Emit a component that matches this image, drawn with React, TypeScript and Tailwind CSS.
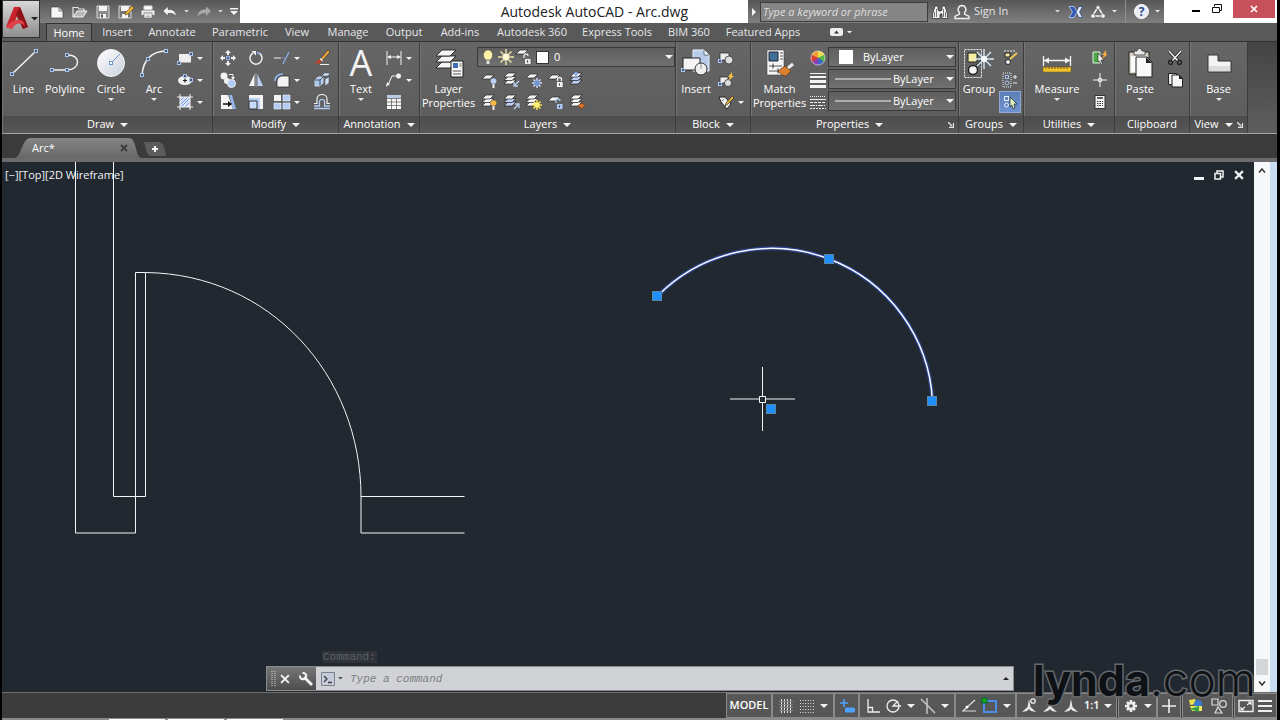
import React from "react";

type IconProps = { children: React.ReactNode; className?: string };

// 16px drawing box, used for the small ribbon tools
const Ico = ({ children, className = "" }: IconProps) => (
  <svg viewBox="0 0 16 16" className={`h-4 w-4 shrink-0 overflow-visible ${className}`} fill="none" aria-hidden="true">
    {children}
  </svg>
);

// 32x30 drawing box, used for the large ribbon tools
const Big = ({ children }: IconProps) => (
  <svg viewBox="0 0 32 30" className="h-[30px] w-8 shrink-0 overflow-visible" fill="none" aria-hidden="true">
    {children}
  </svg>
);

const Caret = ({ className = "w-2 text-gray-100" }: { className?: string }) => (
  <svg viewBox="0 0 8 4" className={`shrink-0 ${className}`} fill="currentColor" aria-hidden="true">
    <path d="M0 0h8L4 4z" />
  </svg>
);

const Grip = ({ x, y }: { x: number; y: number }) => (
  <rect x={x - 1.5} y={y - 1.5} width="3" height="3" fill="#4a5568" stroke="#a9c4f5" />
);

const Sheet = ({ x = 0, y = 0, c = "#f4f4f4" }) => (
  <path d={`M${x + 4} ${y}h8l-4 4h-8z`} fill={c} stroke="#222" strokeWidth=".7" />
);

const Stack = ({ c = "#f4f4f4" }) => (
  <>
    <Sheet y={8} c={c} />
    <Sheet y={4.5} c={c} />
    <Sheet y={1} />
  </>
);

const BigButton = ({ icon, lines, caret, className }: { icon: React.ReactNode; lines: string[]; caret?: boolean; className: string }) => (
  <button className={`flex shrink-0 flex-col items-center pt-1.5 ${className}`}>
    {icon}
    <span className="mt-1 flex flex-col">
      {lines.map((line) => (
        <span key={line} className="leading-[14px]">{line}</span>
      ))}
    </span>
    {caret && <Caret className="mt-0.5 w-1.5 text-gray-200" />}
  </button>
);

const Tool = ({ label, children, caret, className = "justify-center" }: { label: string; children: React.ReactNode; caret?: boolean; className?: string }) => (
  <button aria-label={label} className={`flex h-[22px] items-center gap-1 ${className}`}>
    {children}
    {caret && <Caret className="w-1.5 text-gray-100" />}
  </button>
);

type PanelProps = { title: string; className: string; children: React.ReactNode; caret?: boolean; launcher?: boolean };

const Panel = ({ title, className, children, caret = true, launcher }: PanelProps) => (
  <section className={`flex shrink-0 flex-col border-r border-[#3c3c3c] shadow-[inset_1px_0_0_#757575] ${className}`}>
    <div className="flex h-[74px]">{children}</div>
    <footer className={`relative flex h-[17px] items-center justify-center gap-1.5 bg-linear-to-b from-[#4c4c4c] to-[#585858] ${launcher ? "pr-2.5" : ""}`}>
      <span>{title}</span>
      {caret && <Caret />}
      {launcher && (
        <button aria-label={`${title} settings`} className="absolute right-1 top-1.5">
          <svg viewBox="0 0 6 6" className="h-1.5 w-1.5" stroke="#e5e5e5" fill="none">
            <path d="M0 0l4 4M5.500 1v4.500H1" strokeWidth="1.300" />
          </svg>
        </button>
      )}
    </footer>
  </section>
);

const Combo = ({ label, value, children, className = "" }: { label: string; value: string; children?: React.ReactNode; className?: string }) => (
  <label className={`flex h-5 items-center border border-[#3a3a3a] bg-linear-to-b from-[#5f5f5f] to-[#707070] pr-px ${className}`}>
    {children}
    <select aria-label={label} className="min-w-0 flex-1 appearance-none bg-transparent leading-4 outline-none">
      <option>{value}</option>
    </select>
    <Caret />
  </label>
);

const LineSample = () => (
  <svg viewBox="0 0 56 2" className="ml-1.5 mr-0.5 h-0.5 w-14 shrink-0" aria-hidden="true">
    <path d="M0 1h56" stroke="#f4f4f4" />
  </svg>
);

const QuickAccess = () => (
  <nav aria-label="Quick access" className="flex w-[200px] shrink-0 items-center bg-linear-to-b from-[#565656] via-[#6c6c6c] to-[#808080] pl-[9px]">
    <button aria-label="New" className="w-[23px]">
      <Ico><path d="M2 3h8l4 4v7H2z" fill="#f5f5f5" stroke="#333" strokeWidth=".6" /><path d="M10 3v4h4" stroke="#777" /></Ico>
    </button>
    <button aria-label="Open" className="w-[23px]">
      <Ico><path d="M1 13V3.500h5l1 1.500h5v2" stroke="#e4e4e4" strokeWidth="1.200" /><path d="M1 13l4-6h10l-4 6z" fill="#b8b8b8" stroke="#f2f2f2" /></Ico>
    </button>
    <button aria-label="Save" className="w-[23px]">
      <Ico><path d="M2 2h12v12H2z" fill="#8a8a8a" stroke="#d8d8d8" /><path d="M4 2h8v5H4z" fill="#f4f4f4" /><path d="M5 10h6v4H5z" fill="#f4f4f4" /><path d="M6 10.500h2v3H6z" fill="#555" /></Ico>
    </button>
    <button aria-label="Save as" className="w-[22px]">
      <Ico><path d="M1 2h12v12H1z" fill="#777" stroke="#d8d8d8" /><path d="M3 2h8v5H3z" fill="#f4f4f4" /><path d="M4 10h6v4H4z" fill="#f4f4f4" /><path d="M7 11l1-3 6-6 2 2-6 6z" fill="#e3b23c" stroke="#6b4a12" strokeWidth=".6" /></Ico>
    </button>
    <button aria-label="Plot" className="w-[22px]">
      <Ico><path d="M4 6V2h8v4" fill="#fff" stroke="#ddd" /><rect x="1" y="6" width="14" height="5.500" rx="1" fill="#e8e8e8" stroke="#555" strokeWidth=".6" /><path d="M4 9h8v5H4z" fill="#fff" stroke="#666" strokeWidth=".7" /><path d="M5.500 11h5M5.500 12.500h5" stroke="#888" strokeWidth=".6" /></Ico>
    </button>
    <button aria-label="Undo" className="flex w-[34px] items-center gap-1.5">
      <Ico><path d="M1 7l5-4.500v3c5-.3 8 1.700 8.500 7.500-1.500-3-4-4-8.500-3.700v2.700z" fill="#f2f2f2" stroke="#444" strokeWidth=".5" /></Ico>
      <Caret className="w-[5px] text-gray-300" />
    </button>
    <button aria-label="Redo" className="flex w-[34px] items-center gap-1.5">
      <Ico><path d="M15 7l-5-4.500v3C5 5.200 2 7.200 1.500 13c1.500-3 4-4 8.500-3.700v2.700z" fill="#a9a9a9" /></Ico>
      <Caret className="w-[5px] text-gray-300" />
    </button>
    <button aria-label="Customize" className="text-gray-100">
      <svg viewBox="0 0 8 7" className="w-2" fill="currentColor"><path d="M0 0h8v1.500H0zM0 3h8L4 7z" /></svg>
    </button>
  </nav>
);

const TitleBar = () => (
  <div className="flex h-[23px] min-w-0">
    <QuickAccess />
    <h1 className="flex flex-1 items-center justify-end truncate bg-white pr-[60px] font-['Open_Sans',sans-serif] text-[14px] text-[#222]">
      Autodesk AutoCAD - Arc.dwg
    </h1>
    <div className="flex w-[416px] shrink-0 items-center bg-linear-to-b from-[#565656] via-[#6c6c6c] to-[#808080]">
      <span className="flex h-full w-3 items-center justify-center">
        <svg viewBox="0 0 4 8" className="h-2 w-1" fill="#f4f4f4"><path d="M0 0l4 4-4 4z" /></svg>
      </span>
      <input
        aria-label="Search"
        placeholder="Type a keyword or phrase"
        className="h-5 w-[168px] border border-[#3c3c3c] bg-[#858585] px-0.5 text-[11px] italic placeholder:text-[#dedede]"
      />
      <button aria-label="Find" className="ml-1">
        <Ico>
          <path d="M3 2h3v4l1 1h2l1-1V2h3l2.500 8v4.500h-5.500V10h-2v4.500H.5V10z" fill="#f2f2f2" stroke="#222" strokeWidth=".7" />
          <path d="M4.500 5v8M11.500 5v8M2.500 8v5M13.500 8v5" stroke="#555" strokeWidth=".8" />
        </Ico>
      </button>
      <button className="ml-1.5 flex items-center gap-1 text-[11px] text-gray-200">
        <Ico><path d="M8 1.500a4 4 0 0 1 2.500 7v1.500l4.500 2.500v2H1v-2L5.500 10V8.500A4 4 0 0 1 8 1.500z" fill="#666" stroke="#f0f0f0" strokeWidth="1.400" /></Ico>
        Sign In
      </button>
      <Caret className="ml-auto w-[5px] text-gray-300" />
      <button aria-label="Exchange" className="ml-2">
        <Ico><path d="M1 2.500h5l3 5.500-3 5.500H1L4.500 8z" fill="#2f57b5" stroke="#cfdcff" strokeWidth=".7" /><path d="M14.500 2.500H11L8 8l3 5.500h3.500L11.500 8z" fill="#e8efff" stroke="#27427e" strokeWidth=".7" /></Ico>
      </button>
      <button aria-label="Connect" className="ml-1.5 flex items-center gap-1.5">
        <Ico><path d="M8 3l5.500 9h-11z" stroke="#f2f2f2" strokeWidth="1.500" /><circle cx="8" cy="3.500" r="2" fill="#f2f2f2" stroke="#444" strokeWidth=".5" /><circle cx="3" cy="12" r="2.300" fill="#f2f2f2" stroke="#444" strokeWidth=".5" /><circle cx="13" cy="12" r="2.300" fill="#f2f2f2" stroke="#444" strokeWidth=".5" /></Ico>
        <Caret className="w-[5px] text-gray-200" />
      </button>
      <button aria-label="Help" className="ml-2 flex h-full items-center gap-1.5 border-l border-[#909090] pl-2 pr-1">
        <span className="flex h-[15px] w-[15px] items-center justify-center rounded-full border border-white bg-[#e9edf5] text-[12px] leading-none font-bold text-[#2c4c84]">?</span>
        <Caret className="w-[5px] text-gray-200" />
      </button>
    </div>
    <div className="flex w-[113px] shrink-0 items-start justify-between bg-white pr-0.5 pl-7">
      <button aria-label="Minimize" className="pt-2.5"><span className="block h-0.5 w-2 bg-black" /></button>
      <button aria-label="Restore" className="pt-1">
        <svg viewBox="0 0 10 10" className="w-2.5" fill="none" stroke="#111"><path d="M2.500 2.500v-2h7v6h-2M.5 3.500h7v5h-7z" /></svg>
      </button>
      <button aria-label="Close" className="flex h-[18px] w-[42px] items-center justify-center bg-[#c8505a]">
        <svg viewBox="0 0 8 8" className="w-2" stroke="#fff" strokeWidth="1.700"><path d="M1 1l6 6M7 1L1 7" /></svg>
      </button>
    </div>
  </div>
);

const tabs = [
  { name: "Insert", width: "w-[42px]" },
  { name: "Annotate", width: "w-[68px]" },
  { name: "Parametric", width: "w-[68px]" },
  { name: "View", width: "w-[46px]" },
  { name: "Manage", width: "w-14" },
  { name: "Output", width: "w-14" },
  { name: "Add-ins", width: "w-14" },
  { name: "Autodesk 360", width: "w-[88px]" },
  { name: "Express Tools", width: "w-[82px]" },
  { name: "BIM 360", width: "w-[62px]" },
  { name: "Featured Apps", width: "w-[86px]" },
];

const RibbonTabs = () => (
  <nav className="flex h-[18px] items-stretch overflow-hidden pl-1.5">
    <button className="mr-1 w-[46px] shrink-0 border border-b-0 border-[#303030] bg-[#6a6a6a] leading-4 text-white">Home</button>
    {tabs.map((tab) => (
      <button key={tab.name} className={`shrink-0 whitespace-nowrap text-gray-200 ${tab.width}`}>{tab.name}</button>
    ))}
    <button aria-label="Minimize ribbon" className="ml-6 flex items-center gap-1">
      <svg viewBox="0 0 13 8" className="w-[13px]"><rect width="13" height="8" rx="2" fill="#eee" /><path d="M4 5.500h5L6.500 2.500z" fill="#333" /></svg>
      <Caret className="w-[5px] text-gray-100" />
    </button>
  </nav>
);

const DrawPanel = () => (
  <Panel title="Draw" className="w-[211px] pl-px">
    <BigButton className="w-[41px]" lines={["Line"]} icon={<Big><path d="M4 26L28 3" stroke="#f2f2f2" strokeWidth="1.500" /><Grip x={4} y={26} /><Grip x={28} y={3} /></Big>} />
    <BigButton className="w-[42px]" lines={["Polyline"]} icon={<Big><path d="M3 22h15c14 0 14-16 0-15" stroke="#f2f2f2" strokeWidth="1.500" /><Grip x={3} y={22} /><Grip x={18} y={22} /><Grip x={18} y={7} /></Big>} />
    <BigButton
      className="w-[50px]" caret lines={["Circle"]}
      icon={<Big><defs><linearGradient id="disc" x1="0" y1="0" x2="1" y2="1"><stop stopColor="#fff" /><stop offset="1" stopColor="#c9cfd9" /></linearGradient></defs><circle cx="16" cy="15" r="13.500" fill="url(#disc)" stroke="#f4f4f4" /><path d="M16 15l9-9" stroke="#6f93d6" /><rect x="14.500" y="13.500" width="3" height="3" fill="#fff" stroke="#6f93d6" /></Big>}
    />
    <BigButton className="w-9" caret lines={["Arc"]} icon={<Big><path d="M4 27C5 12 14 3 28 3" stroke="#f2f2f2" strokeWidth="1.500" /><Grip x={4} y={27} /><Grip x={10} y={11} /><Grip x={28} y={3} /></Big>} />
    <div className="ml-[5px] pt-[5px]">
      <Tool label="Rectangle" caret><Ico><rect x="2" y="4" width="12" height="8.500" fill="#eee" /><Grip x={2} y={13} /><Grip x={14} y={4} /></Ico></Tool>
      <Tool label="Ellipse" caret><Ico><ellipse cx="8" cy="8.500" rx="7" ry="4.500" fill="#f2f2f2" /><path d="M8 6.500v4M6 8.500h4" stroke="#222" strokeWidth="1.200" /><Grip x={14} y={8} /><Grip x={8} y={4} /></Ico></Tool>
      <Tool label="Hatch" caret><Ico><rect x="3" y="3" width="10" height="10" fill="#dbe5fb" /><path d="M3 7l4-4M3 11l8-8M4 13l9-9M8 13l5-5" stroke="#6f93d6" /><path d="M3 0v16M13 0v16M0 3h16M0 13h16" stroke="#f4f4f4" /></Ico></Tool>
    </div>
  </Panel>
);

const ModifyPanel = () => (
  <Panel title="Modify" className="w-[126px]">
    <div className="grid h-fit grid-cols-[28px_28px_38px_28px] pt-[5px] pl-px">
      <Tool label="Move"><Ico><path d="M8 0l3 3H9v2H7V3H5zM8 16l3-3H9v-2H7v2H5zM0 8l3-3v2h2v2H3v2zM16 8l-3-3v2h-2v2h2v2z" fill="#f4f4f4" /><rect x="6.500" y="6.500" width="3" height="3" stroke="#8fb0ee" /></Ico></Tool>
      <Tool label="Rotate"><Ico><path d="M5 3A6 6 0 1 0 11 3" stroke="#f0f0f0" strokeWidth="1.500" /><path d="M3.500 1H8v4.500z" fill="#f0f0f0" /><path d="M9 2.500l3 1.500" stroke="#8fb0ee" strokeWidth="1.500" /></Ico></Tool>
      <Tool label="Trim" caret className="pl-1"><Ico><path d="M0 8h7" stroke="#f0f0f0" /><path d="M8 8h3" stroke="#8fb0ee" strokeDasharray="1 1" /><path d="M9 14l6-12" stroke="#8fb0ee" strokeWidth="1.300" /></Ico></Tool>
      <Tool label="Erase"><Ico><path d="M7 8l7-8 2 2-7 8z" fill="#f0a63c" stroke="#222" strokeWidth=".6" /><path d="M7 8l2 2-1 1.500L5.500 9z" fill="#f4f4f4" /><path d="M5.500 9L8 11.500C6 14 3 14 1 13z" fill="#c2412a" /><path d="M6 14.500h9" stroke="#eee" /></Ico></Tool>
      <Tool label="Copy"><Ico><circle cx="4" cy="4" r="3.500" fill="#f2f2f2" /><circle cx="7" cy="9" r="3" fill="#f2f2f2" /><circle cx="11.500" cy="11.500" r="4" fill="#aecbf5" stroke="#eee" /><path d="M9 2.500h4v3" stroke="#f2f2f2" /><path d="M11 5h4l-2 3z" fill="#f2f2f2" /></Ico></Tool>
      <Tool label="Mirror"><Ico><path d="M6.500 2v12H1z" fill="#f4f4f4" /><path d="M9.500 2v12H15z" fill="#bcd1f5" /><path d="M8 1v14" stroke="#c9c9c9" strokeWidth=".7" /></Ico></Tool>
      <Tool label="Fillet" caret className="pl-1"><Ico><path d="M3 15V9a6 6 0 0 1 6-5h6v11z" fill="#f2f2f2" stroke="#222" strokeWidth=".7" /><path d="M1 9c0-4 3-7 8-7" stroke="#8fb0ee" strokeWidth="1.700" /></Ico></Tool>
      <Tool label="Explode"><Ico><path d="M1 8l3-3h5v6l-3 3H1z" fill="#a9c6ee" stroke="#eef4ff" strokeWidth=".7" /><path d="M1 8h5v6M6 8l3-3" stroke="#456" /><path d="M8 4l2-3h6l-2 3zM11 7l4-2v6l-4 3z" fill="#d3e2f8" stroke="#456" strokeWidth=".6" /></Ico></Tool>
      <Tool label="Stretch"><Ico><path d="M1 1h7l5 14H1z" fill="#f4f4f4" /><path d="M9 1h3l4 14h-3z" fill="#93b5ec" /><path d="M3 10h7" stroke="#111" strokeWidth="1.500" /><path d="M8 7l4 3-4 3z" fill="#111" /></Ico></Tool>
      <Tool label="Scale"><Ico><path d="M1 1h14v14H1z" fill="#bcd1f5" /><path d="M1 1h14v14h-3V4H1z" fill="#f4f4f4" /><path d="M1 7h8v8H1z" fill="#c9dcfb" stroke="#333" /></Ico></Tool>
      <Tool label="Array" caret className="pl-1"><Ico><path d="M0 1h7v6H0z" fill="#f4f4f4" /><path d="M9 1h7v6H9zM0 9h7v6H0zM9 9h7v6H9z" fill="#b5cdf5" stroke="#eaf1ff" strokeWidth=".6" /></Ico></Tool>
      <Tool label="Offset"><Ico><path d="M0 14.500h16M0 12h5.500V7a2.700 2.700 0 0 1 5 0v5H16" stroke="#b5cdf5" strokeWidth="1.300" /><path d="M0 9.500h3V5c0-6 10-6 10 0v4.500h3" stroke="#f2f2f2" strokeWidth="1.200" /></Ico></Tool>
    </div>
  </Panel>
);

const AnnotationPanel = () => (
  <Panel title="Annotation" className="w-[81px]">
    <BigButton className="w-11" caret lines={["Text"]} icon={<span className="flex h-[30px] items-center font-['Open_Sans',sans-serif] text-[36px] leading-[30px] text-gray-100">A</span>} />
    <div className="ml-[3px] pt-[5px]">
      <Tool label="Dimension" caret><Ico><path d="M1 1v14M15 1v14M2 7h12" stroke="#f2f2f2" /><path d="M1 7l4-2v4zM15 7l-4-2v4z" fill="#f2f2f2" /></Ico></Tool>
      <Tool label="Leader" caret><Ico><circle cx="12.500" cy="4" r="3" fill="#f4f4f4" stroke="#333" strokeWidth=".6" /><path d="M9.500 4H6L2 13" stroke="#f2f2f2" /><path d="M0 15l1-5 3 2z" fill="#f2f2f2" /></Ico></Tool>
      <Tool label="Table"><Ico className="mr-3"><path d="M1 1h14v14H1z" fill="#f7f7f7" /><path d="M1 1h14v3H1z" fill="#b9c9e6" /><path d="M1 4.500h14M1 8h14M1 11.500h14M5.500 4v11M10.500 4v11" stroke="#666" strokeWidth=".8" /></Ico></Tool>
    </div>
  </Panel>
);

const Bulb = ({ c }: { c: string }) => <><path d="M10 12C7 10 8 6 11.500 6S16 10 13 12z" fill={c} stroke="#444" strokeWidth=".5" /><path d="M10.500 12h2v4h-2z" fill="#eee" /></>;
const Lock = ({ open, c }: { open?: boolean; c: string }) => <><path d={open ? "M8 9V7a2 2 0 0 1 4 0" : "M9.500 9V7.500a2 2 0 0 1 4 0V9"} stroke={c} strokeWidth="1.300" /><path d="M8.500 9.500h6.500v6H8.500z" fill={c} stroke="#333" strokeWidth=".5" /><path d="M11.500 11.500v2" stroke="#333" /></>;
const Rays = ({ c, core }: { c: string; core: string }) => <><path d="M11 6v10M6 11h10M7.500 7.500l7 7M14.500 7.500l-7 7" stroke={c} strokeWidth="1.500" /><circle cx="11" cy="11" r="2.600" fill={core} /></>;

const layerTools = [
  { label: "Off", icon: <><Sheet y={3} /><Bulb c="#bcd1f5" /></> },
  { label: "Isolate", icon: <><Stack /><path d="M15 9l-4 4M10 10v4h4" stroke="#bcd1f5" strokeWidth="1.300" /></> },
  { label: "Freeze", icon: <><Sheet y={2} /><Rays c="#c9dcfb" core="#6f93d6" /></> },
  { label: "Lock", icon: <><Sheet y={3} /><Lock c="#f4f4f4" /></> },
  { label: "Make Current", icon: <><Stack c="#bcd1f5" /><circle cx="6" cy="2" r="2" fill="#8fb0ee" /></> },
  { label: "Turn All Layers On", icon: <><Stack /><Bulb c="#f5b947" /></> },
  { label: "Unisolate", icon: <><Stack c="#bcd1f5" /><path d="M10 15l4-4M11 10h4v4" stroke="#bcd1f5" strokeWidth="1.300" /></> },
  { label: "Thaw All Layers", icon: <><Stack /><Rays c="#f6e04b" core="#fff27d" /></> },
  { label: "Unlock", icon: <><Sheet y={3} /><Lock open c="#a9c6ee" /></> },
  { label: "Match Layer", icon: <><Stack /><path d="M8 12l3-3 4 2-3 4z" fill="#d8702a" stroke="#5a2c0c" strokeWidth=".5" /></> },
];

const LayersPanel = () => (
  <Panel title="Layers" className="w-64">
    <BigButton
      className="w-[57px]" lines={["Layer", "Properties"]}
      icon={<Big><g fill="#f6f6f6" stroke="#222" strokeWidth=".9"><path d="M9 14h14l-6 6H3z" /><path d="M9 8h14l-6 6H3z" /><path d="M9 2h14l-6 6H3z" /></g><path d="M18 13h12v16H18z" fill="#f7f7f7" stroke="#222" /><path d="M20 15h5v5h-5z" fill="#3d6db5" /><path d="M26.500 16h2M26.500 18h2M20 23h8M20 26h8" stroke="#555" /></Big>}
    />
    <div className="min-w-0 flex-1 pt-[5px]">
      <Combo label="Layer" value="0">
        <Ico className="ml-0.5"><path d="M6 11C1 7 4 1 8 1s7 6 2 10z" fill="#fff3a8" stroke="#444" strokeWidth=".5" /><path d="M6.500 11.500h3V15h-3z" fill="#e0e0e0" /></Ico>
        <Ico className="ml-0.5"><path d="M8 0v16M0 8h16M2.500 2.500l11 11M13.500 2.500l-11 11" stroke="#f4e9a6" strokeWidth="1.400" /><circle cx="8" cy="8" r="4" fill="#fff8cf" stroke="#777" strokeWidth=".6" /></Ico>
        <Ico className="ml-0.5"><Sheet y={1} /><Lock open c="#e8e8e8" /></Ico>
        <span className="ml-1 mr-[5px] h-[13px] w-[13px] border border-[#333] bg-white" />
      </Combo>
      <div className="grid grid-cols-[repeat(5,22px)] pt-0.5 pl-0.5">
        {layerTools.map((tool) => <Tool key={tool.label} label={tool.label}><Ico>{tool.icon}</Ico></Tool>)}
      </div>
    </div>
  </Panel>
);

const BlockPanel = () => (
  <Panel title="Block" className="w-[75px]">
    <BigButton
      className="w-10" lines={["Insert"]}
      icon={<Big><path d="M13 2h11l5 5v16H13z" fill="#b7cbe8" stroke="#eef4ff" /><path d="M24 2v5h5" fill="#f0f4fb" stroke="#678" /><path d="M3 10h17v12H3z" fill="#f4f4f4" stroke="#222" /><circle cx="21" cy="21" r="6" fill="#eee" stroke="#333" /><path d="M21 21v-5" stroke="#999" /><Grip x={3} y={22} /></Big>}
    />
    <div className="ml-0.5 pt-[5px]">
      <Tool label="Create Block" className=""><Ico><path d="M2 3h9v7H2z" fill="#eee" stroke="#222" strokeWidth=".7" /><circle cx="11" cy="10" r="4" fill="#ddd" stroke="#222" strokeWidth=".7" /><Grip x={2} y={11} /></Ico></Tool>
      <Tool label="Edit Block" className=""><Ico><path d="M2 5h8v6H2z" fill="#eee" stroke="#222" strokeWidth=".7" /><circle cx="10" cy="11" r="3.500" fill="#ddd" stroke="#222" strokeWidth=".7" /><path d="M14 0l-4 5h2l-2 4 6-5h-2z" fill="#f5c542" /><Grip x={2} y={12} /></Ico></Tool>
      <Tool label="Edit Attributes" caret><Ico><path d="M1 3h6l6 7-4 5-6-7z" fill="#f0f0f0" stroke="#222" /><path d="M4 7l2-2M7 12l1-3 6-7 2 2-6 6z" fill="#e3b23c" stroke="#333" strokeWidth=".7" /></Ico></Tool>
    </div>
  </Panel>
);

const PropertiesPanel = () => (
  <Panel title="Properties" className="w-[208px]" launcher>
    <BigButton
      className="w-[57px]" lines={["Match", "Properties"]}
      icon={<Big><path d="M3 2h17v25H3z" fill="#f7f7f7" stroke="#444" strokeWidth=".6" /><path d="M5 4h9v9H5z" fill="#3f6f96" stroke="#223" /><path d="M16 5h3M16 8h3M16 11h3M5 18h13M5 23h13" stroke="#555" /><path d="M9 15.500v5M14 20.500v5" stroke="#333" /><path d="M14 23l7-5 6 5-5 5c-3 0-6-2-8-5z" fill="#d9812f" stroke="#5a2c0c" strokeWidth=".7" /><path d="M24 20l5-4" stroke="#eee" strokeWidth="3" /></Big>}
    />
    <div className="w-5 pt-[5px]">
      <Tool label="Object Color" className="pl-0.5"><Ico><path d="M8 8L1.500 5A7 7 0 0 1 8 1z" fill="#f29f38" /><path d="M8 8V1a7 7 0 0 1 6.500 4z" fill="#e9e04b" /><path d="M8 8l6.500-3a7 7 0 0 1-.5 7z" fill="#56b54c" /><path d="M8 8l6 4a7 7 0 0 1-6 3z" fill="#3764c9" /><path d="M8 8v7a7 7 0 0 1-6-3z" fill="#8c3fb5" /><path d="M8 8l-6 4a7 7 0 0 1-.5-7z" fill="#dc3b34" /><circle cx="8" cy="8" r="7" stroke="#eee" strokeWidth=".6" /></Ico></Tool>
      <Tool label="Lineweight" className="pl-0.5"><Ico><path d="M0 1.500h16" stroke="#f4f4f4" /><path d="M0 5h16" stroke="#f4f4f4" strokeWidth="2" /><path d="M0 9.500h16M0 14.500h16" stroke="#f4f4f4" strokeWidth="3" /></Ico></Tool>
      <Tool label="Linetype" className="pl-0.5"><Ico><path d="M0 2.500h16" stroke="#eee" strokeDasharray="1 1" /><path d="M0 5.500h16" stroke="#eee" /><path d="M0 8.500h16" stroke="#eee" strokeDasharray="3 1" /><path d="M0 11.500h16" stroke="#eee" strokeDasharray="5 1 1 1" /><path d="M0 14.500h16" stroke="#eee" strokeDasharray="2 1" /></Ico></Tool>
    </div>
    <div className="mr-0.5 flex min-w-0 flex-1 flex-col gap-0.5 pt-[5px]">
      <Combo label="Object Color" value="ByLayer"><span className="mr-2.5 ml-2.5 h-3.5 w-3.5 bg-white" /></Combo>
      <Combo label="Lineweight" value="ByLayer"><LineSample /></Combo>
      <Combo label="Linetype" value="ByLayer"><LineSample /></Combo>
    </div>
  </Panel>
);

const GroupsPanel = () => (
  <Panel title="Groups" className="w-[65px]">
    <BigButton
      className="w-10" lines={["Group"]}
      icon={<Big><path d="M1.500 1.500h17v28h-17z" stroke="#eee" strokeDasharray="2 1" /><path d="M5 5h9v9H5z" fill="#f4efa0" stroke="#222" /><circle cx="10" cy="22" r="4.500" fill="#f4f4f4" stroke="#222" strokeWidth="1.400" /><path d="M13 18l6-6" stroke="#333" strokeWidth="2" /><path d="M21 1v20M11 11h20M14 4l14 14M28 4L14 18" stroke="#d5ebfb" strokeWidth="1.400" /><circle cx="21" cy="11" r="3" fill="#fff" /></Big>}
    />
    <div className="w-[22px] pt-[5px]">
      <Tool label="Ungroup" className="w-full justify-center"><Ico><path d="M3 3h5v4H3z" fill="#f4efa0" stroke="#222" /><path d="M2 1h12" stroke="#eee" strokeDasharray="2 1" /><circle cx="6" cy="12" r="2.500" fill="#f4f4f4" stroke="#222" /><path d="M8 9l7-6" stroke="#eec850" strokeWidth="2" /></Ico></Tool>
      <Tool label="Group Edit" className="w-full justify-center"><Ico><path d="M1 1h8v14H1z" stroke="#eee" strokeDasharray="1 1" /><rect x="3.500" y="3.500" width="3" height="3" stroke="#a9c6ee" /><circle cx="5" cy="11" r="2" stroke="#a9c6ee" /><path d="M11 5h4M13 3v4M11 11h4" stroke="#eee" /></Ico></Tool>
      <Tool label="Group Selection" className="w-full justify-center border border-[#8fa8d4] bg-linear-to-b from-[#5c7eb8] to-[#6f93cf]"><Ico><rect x="2.500" y="2.500" width="4" height="4" stroke="#e6efff" /><circle cx="4.500" cy="11" r="2" stroke="#e6efff" /><path d="M8 3l7 7h-3l1 4-2 .5-1.300-3.500L8 13z" fill="#d9f0c0" stroke="#222" strokeWidth=".7" /></Ico></Tool>
    </div>
  </Panel>
);

const UtilitiesPanel = () => (
  <Panel title="Utilities" className="w-[91px]">
    <BigButton
      className="w-[66px]" caret lines={["Measure"]}
      icon={<Big><path d="M2.500 8v10M29.500 8v10M3 12.500h26" stroke="#f4f4f4" strokeWidth="1.300" /><path d="M3 12.500l5-3v6zM29 12.500l-5-3v6z" fill="#f4f4f4" /><path d="M2 19h28v5H2z" fill="#f2c230" stroke="#6d5510" strokeWidth=".5" /><path d="M5 19v2M8 19v2M11 19v2M14 19v2M17 19v2M20 19v2M23 19v2M26 19v2" stroke="#6d5510" /></Big>}
    />
    <div className="ml-0.5 w-5 pt-[5px]">
      <Tool label="Quick Select"><Ico><path d="M1 2h7v11H1z" fill="#4fa847" stroke="#dff2dc" /><path d="M6 3l6 7H9l1.500 4-1.500.5L7.500 11 6 12z" fill="#f4f4f4" stroke="#222" strokeWidth=".6" /><path d="M14 0l-4 5h2l-2 4 6-5h-2z" fill="#f5a742" /></Ico></Tool>
      <Tool label="ID Point"><Ico><path d="M8 1v14M1 8h14" stroke="#f4f4f4" /><circle cx="8" cy="8" r="2" stroke="#f4f4f4" /></Ico></Tool>
      <Tool label="Calculator"><Ico><path d="M3 1.500h10v13H3z" fill="#f4f4f4" stroke="#333" /><path d="M5 4h6" stroke="#333" strokeWidth="1.500" /><path d="M5 7.500h6M5 9.500h6M5 11.500h6" stroke="#333" strokeDasharray="1.500 1" /></Ico></Tool>
    </div>
  </Panel>
);

const ClipboardPanel = () => (
  <Panel title="Clipboard" className="w-[75px]" caret={false}>
    <BigButton
      className="w-[50px]" caret lines={["Paste"]}
      icon={<Big><path d="M5 4h20v22H5z" fill="#d9d2c4" stroke="#222" /><path d="M7 8h16v16H7z" fill="#fafafa" /><path d="M10 3h3a2.500 2.500 0 0 1 5 0h3v4H10z" fill="#e8e8e8" stroke="#333" strokeWidth=".8" /><path d="M12 9h11l5 5v15H12z" fill="#f8f8f8" stroke="#222" /><path d="M22 9v6h6z" fill="#222" /></Big>}
    />
    <div className="ml-0.5 pt-[5px]">
      <Tool label="Cut"><Ico><path d="M2 1l9 10M14 1L5 11" stroke="#222" strokeWidth="3" /><path d="M2 1l9 10M14 1L5 11" stroke="#f2f2f2" strokeWidth="1.500" /><circle cx="3.500" cy="12.500" r="2" stroke="#222" strokeWidth="1.300" /><circle cx="12.500" cy="12.500" r="2" stroke="#222" strokeWidth="1.300" /></Ico></Tool>
      <Tool label="Copy"><Ico><path d="M1.500 1.500h8v11h-8z" fill="#eee" stroke="#222" /><path d="M5 3h7l3.500 3.500V15H5z" fill="#f8f8f8" stroke="#222" /><path d="M12 3v4h4z" fill="#222" /></Ico></Tool>
    </div>
  </Panel>
);

const ViewPanel = () => (
  <Panel title="View" className="w-[58px]" launcher>
    <BigButton
      className="w-[57px]" caret lines={["Base"]}
      icon={<Big><path d="M5 7h10v6h13v11H5z" fill="#f4f4f4" stroke="#333" /><path d="M6 18h21v5H6z" fill="#dcdcdc" /></Big>}
    />
  </Panel>
);

const FileTabs = () => (
  <div className="flex h-7 items-end border-b-4 border-[#6b6b6e] bg-[#3b3b3b] pl-3">
    <div className="relative flex h-5 w-32 items-center justify-between pr-3.5 pl-[18px]">
      <svg viewBox="0 0 128 19" preserveAspectRatio="none" className="absolute inset-0 h-full w-full" aria-hidden="true">
        <defs><linearGradient id="tab" x1="0" y1="0" x2="0" y2="1"><stop stopColor="#858585" /><stop offset="1" stopColor="#686868" /></linearGradient></defs>
        <path d="M0 19c8 0 7-19 17-19h98c8 0 6 19 13 19z" fill="url(#tab)" />
      </svg>
      <a href="#arc" className="relative leading-4 text-white">Arc*</a>
      <button aria-label="Close Arc" className="relative">
        <svg viewBox="0 0 8 8" className="w-2" stroke="#3c3c3c" strokeWidth="1.800"><path d="M1 1l6 6M7 1L1 7" /></svg>
      </button>
    </div>
    <button aria-label="New drawing" className="mb-0.5 ml-0.5">
      <svg viewBox="0 0 22 14" className="h-3.5 w-[22px]"><path d="M0 0h14c5 0 7 5 8 14H7C2 14 2 5 0 0z" fill="#5c5c5c" /><path d="M11 4v6M8 7h6" stroke="#f2f2f2" strokeWidth="2" /></svg>
    </button>
  </div>
);

const grips = [[657, 296], [829, 259], [932, 401], [771, 409]];

// drawing coordinates keep the offset of the canvas inside the window
const Drawing = () => (
  <svg viewBox="2 162 1252 530" className="absolute top-0 left-0 h-[530px] w-[1252px]" fill="none" aria-hidden="true">
    <g stroke="#f2f4f5">
      <path d="M75.500 162v371h60V272.500h10v224h-32V162" />
      <path d="M464.500 533H361v-36.500h103.500" />
      <path d="M145.500 272.500C270 274 361 375 361 497" />
    </g>
    <path d="M657.500 296A161 161 0 0 1 932.500 401" stroke="#2c4cae" strokeWidth="4" opacity=".7" />
    <path d="M657.500 296A161 161 0 0 1 932.500 401" stroke="#f5f8ff" strokeWidth="1.500" />
    {grips.map(([x, y]) => (
      <rect key={x} x={x - 4.5} y={y - 4.5} width="9" height="9" fill="#1e90ff" stroke="#5b86a8" />
    ))}
    <path d="M730 399h29M766 399h29M762.500 367v29M762.500 402v29" stroke="#f2f2f2" />
    <path d="M759.500 396.500h6v6h-6z" stroke="#fff" />
  </svg>
);

const CommandLine = () => (
  <div className="relative mt-auto mr-60 mb-px ml-[264px]">
    <span className="ml-14 inline-block bg-[#30343a] px-px font-['Liberation_Mono',monospace] text-[11px] leading-3 text-[#5d6165]">Command:</span>
    <div className="mt-0.5 flex h-[25px] border border-[#8a8c8f] bg-[#d0d2d5]">
      <div className="flex w-[49px] items-center gap-1 bg-linear-to-b from-[#777] to-[#4d4d4d] pl-1">
        <svg viewBox="0 0 5 16" className="h-4 w-[5px]"><path d="M1 0v16M4 0v16" stroke="#ddd" strokeDasharray="1 1" /></svg>
        <button aria-label="Close command line"><svg viewBox="0 0 9 9" className="w-2.5" stroke="#f2f2f2" strokeWidth="1.800"><path d="M1 1l7 7M8 1L1 8" /></svg></button>
        <button aria-label="Customize command line" className="ml-1">
          <Ico><path d="M6 6l8 8" stroke="#f2f2f2" strokeWidth="2.800" /><path d="M2 4.500A3.200 3.200 0 1 0 4.500 2" stroke="#f2f2f2" strokeWidth="2" /></Ico>
        </button>
      </div>
      <label className="flex flex-1 items-center pr-1 pl-[5px]">
        <svg viewBox="0 0 14 14" className="h-3.5 w-3.5" fill="#c5cbd8" stroke="#7c8088"><path d="M.5.5h13v13H.5z" /><path d="M3 4l3 3-3 3M7 10.500h4" fill="none" stroke="#3a3d44" strokeWidth="1.300" /></svg>
        <Caret className="mx-[3px] w-[5px] text-[#555]" />
        <input aria-label="Command" placeholder="Type a command" className="min-w-0 flex-1 pl-1 pt-0.5 font-['Liberation_Mono',monospace] text-[11px] italic outline-none placeholder:text-[#7c7e82]" />
        <svg viewBox="0 0 8 4" className="w-1.5"><path d="M0 4h8L4 0z" fill="#222" /></svg>
      </label>
    </div>
  </div>
);

const DrawingWindow = () => (
  <main className="flex min-h-0 flex-1">
    <div className="relative flex min-w-0 flex-1 flex-col overflow-hidden bg-[#212830]">
      <Drawing />
      <div className="relative flex items-center justify-between pt-1 pr-2.5 pl-[3px]">
        <span className="leading-[18px] text-gray-100">[−][Top][2D Wireframe]</span>
        <span className="flex items-center gap-2.5">
          <button aria-label="Minimize drawing" className="pt-1.5"><span className="block h-[3px] w-2.5 bg-gray-100" /></button>
          <button aria-label="Restore drawing"><svg viewBox="0 0 10 10" className="w-2.5" fill="none" stroke="#f2f2f2" strokeWidth="1.500"><path d="M3 3V1h6v6H7M1 3.500h5.500V9H1z" /></svg></button>
          <button aria-label="Close drawing"><svg viewBox="0 0 9 9" className="w-2.5" stroke="#f2f2f2" strokeWidth="2"><path d="M1 1l7 7M8 1L1 8" /></svg></button>
        </span>
      </div>
      <CommandLine />
    </div>
    <div className="flex w-4 shrink-0 flex-col items-center bg-[#f6f7f8] py-1.5">
      <svg viewBox="0 0 8 5" className="w-2" fill="none" stroke="#333" strokeWidth="1.500"><path d="M1 4.500l3-3.500 3 3.500" /></svg>
      <span className="mt-auto mb-1.5 h-4 w-3 bg-[#d4d5d6]" />
      <svg viewBox="0 0 8 5" className="w-2" fill="none" stroke="#333" strokeWidth="1.500"><path d="M1 .5L4 4 7 .5" /></svg>
    </div>
    <div className="w-[7px] shrink-0 bg-[#c9dcf2]" />
  </main>
);

const StatusGroup = ({ children, className }: { children: React.ReactNode; className: string }) => (
  <div className={`flex shrink-0 items-center justify-around border border-[#8a8a8a] bg-[#575757] px-0.5 ${className}`}>{children}</div>
);

const person = "M8 1l1.500 8 5.500 5-5-1-2-2-2 2-5 1 5.500-5z";

const StatusBar = () => (
  <footer className="flex h-[26px] shrink-0 justify-end border-t border-[#6e6e6e] bg-[#3c3c3c] text-white">
    <StatusGroup className="w-[46px]"><button className="font-semibold">MODEL</button></StatusGroup>
    <StatusGroup className="w-[62px]">
      <button aria-label="Grid"><Ico><path d="M3.500 1v14M6.500 1v14M9.500 1v14M12.500 1v14" stroke="#eee" strokeDasharray="2 1" strokeWidth=".9" /><path d="M1 3.500h14M1 6.500h14M1 9.500h14M1 12.500h14" stroke="#aaa" strokeWidth=".5" /></Ico></button>
      <button aria-label="Snap"><Ico><path d="M1 2.500h14M1 5.500h14M1 8.500h14M1 11.500h14M1 14.500h14" stroke="#ddd" strokeDasharray="1 1.600" /></Ico></button>
      <Caret />
    </StatusGroup>
    <StatusGroup className="w-[25px]"><button aria-label="Dynamic input"><Ico><path d="M5 1v8M1 5h8" stroke="#4da3ff" strokeWidth="1.500" /><rect x="6" y="9.500" width="10" height="5" rx="1.500" fill="#4da3ff" /></Ico></button></StatusGroup>
    <StatusGroup className="w-24">
      <button aria-label="Ortho"><Ico><path d="M3 1v13h12M3 9.500h4.500V14" stroke="#eee" strokeWidth="1.300" /></Ico></button>
      <button aria-label="Polar"><Ico><circle cx="7" cy="8" r="6" stroke="#eee" strokeWidth="1.300" /><path d="M15 8H7l5-5" stroke="#eee" strokeWidth="1.300" /></Ico></button>
      <Caret />
      <button aria-label="Isodraft"><Ico><path d="M1 1l14 14M7 0v16" stroke="#ccc" strokeWidth="1.400" /></Ico></button>
      <Caret />
    </StatusGroup>
    <StatusGroup className="w-[61px]">
      <button aria-label="Object tracking"><Ico><path d="M14 2L2 13h13" stroke="#ddd" strokeWidth="1.200" /><circle cx="6" cy="9" r="1.500" fill="#fff" /></Ico></button>
      <button aria-label="Object snap"><Ico><path d="M2 3h12v11H2z" stroke="#4b8ee8" strokeWidth="2" /><rect x="0" y="0" width="5" height="5" fill="#16a516" stroke="#063" /></Ico></button>
      <Caret />
    </StatusGroup>
    <StatusGroup className="w-[101px]">
      <button aria-label="Annotation visibility"><Ico><path d={person} fill="#e8e8e8" /><circle cx="12" cy="3" r="2.200" fill="#575757" stroke="#eee" strokeWidth="1.300" /></Ico></button>
      <button aria-label="Auto scale"><Ico><path d={person} fill="#e8e8e8" /><path d="M15 0l-4 4h2l-2 4 5-5h-2z" fill="#eee" /></Ico></button>
      <button aria-label="Annotation scale"><Ico><path d={person} fill="#e8e8e8" /></Ico></button>
      <button className="flex items-center gap-1 font-semibold">1:1 <Caret /></button>
    </StatusGroup>
    <StatusGroup className="ml-px w-[39px]">
      <button aria-label="Workspace"><Ico><path d="M8 2v12M2 8h12M4 4l8 8M12 4l-8 8" stroke="#eee" strokeWidth="2.500" /><circle cx="8" cy="8" r="4" fill="#eee" /><circle cx="8" cy="8" r="1.800" fill="#575757" /></Ico></button>
      <Caret />
    </StatusGroup>
    <StatusGroup className="w-6"><button aria-label="Monitor"><Ico><path d="M8 1v14M1 8h14" stroke="#eee" strokeWidth="1.600" /></Ico></button></StatusGroup>
    <StatusGroup className="ml-px w-[51px]">
      <button aria-label="Performance"><Ico><path d="M1 2l6-1 2 5-7 1z" fill="#e8e04b" /><circle cx="10" cy="6" r="4" fill="#377bd0" /><path d="M2 8h12v5H4z" fill="#e9e55c" /><path d="M2 11l9-3v6z" fill="#35a045" /></Ico></button>
      <button aria-label="Isolate objects"><Ico><path d="M1 1h6v6H1zM4 15l3-6 4 6z" stroke="#ddd" strokeWidth="1.200" /><circle cx="12" cy="6" r="3.300" stroke="#ddd" strokeWidth="1.200" /></Ico></button>
    </StatusGroup>
    <StatusGroup className="ml-px w-[43px]">
      <button aria-label="Clean screen"><Ico><path d="M1 2.500h14v11H1z" stroke="#eee" strokeWidth="1.400" /><path d="M9 7l4-3M13 7V4h-3M7 9l-4 3M3 9v3h3" stroke="#eee" strokeWidth="1.200" /></Ico></button>
      <button aria-label="Customization"><Ico><path d="M1 3h14M1 8h14M1 13h14" stroke="#eee" strokeWidth="2" /></Ico></button>
    </StatusGroup>
  </footer>
);

// top edge of the strip that sits under the status bar
const BottomEdge = () => (
  <div className="flex h-0.5 gap-[3px] bg-[#8a8a8a]">
    <span className="w-26" />
    <span className="mt-px w-14 bg-white" />
    <span className="mt-px w-14 bg-white" />
    <span className="mt-px w-14 bg-white" />
  </div>
);

const App = () => {
  return (
    <div className="relative flex min-h-screen flex-col overflow-hidden bg-black pr-[3px] pl-0.5 font-['Open_Sans',sans-serif] text-[11px] text-white">
      <header className="bg-[#595959]">
        <div className="flex h-[41px]">
          <button aria-label="Application menu" className="flex h-[38px] w-[38px] shrink-0 items-center justify-center gap-0.5 border border-[#333] bg-linear-to-b from-[#d8d8d8] to-[#8e8e8e]">
            <svg viewBox="0 0 24 26" className="w-6" fill="none">
              <path d="M9 1h6l8 20-5 2-6-13-5 13-6-2z" fill="#c8222c" />
              <path d="M15 1l8 20-5 2-7-15z" fill="#8d1219" />
              <path d="M1 21c6-7 12-8 17-6l2 5c-6-4-9-3-13 3z" fill="#e04048" />
            </svg>
            <Caret className="w-[7px] text-[#222]" />
          </button>
          <div className="flex min-w-0 flex-1 flex-col justify-between">
            <TitleBar />
            <RibbonTabs />
          </div>
        </div>
        <div className="flex border-t border-b border-t-[#333] border-b-[#a5a5a5] bg-linear-to-b from-[#666] to-[#5b5b5b]">
          <DrawPanel />
          <ModifyPanel />
          <AnnotationPanel />
          <LayersPanel />
          <BlockPanel />
          <PropertiesPanel />
          <GroupsPanel />
          <UtilitiesPanel />
          <ClipboardPanel />
          <ViewPanel />
          <div className="flex-1 bg-linear-to-b from-[#444] to-[#5e5e5e]" />
        </div>
        <FileTabs />
      </header>
      <DrawingWindow />
      <StatusBar />
      <BottomEdge />
      <div className="pointer-events-none absolute right-6 bottom-4 flex items-baseline font-['Inter',sans-serif] text-[43px] leading-[48px] text-[#0e1116] [paint-order:stroke] [-webkit-text-stroke:3px_#66696c]">
        <span className="font-bold">lynda</span>
        <span className="text-[46px] font-light">.com</span>
      </div>
    </div>
  );
};

export default App;
